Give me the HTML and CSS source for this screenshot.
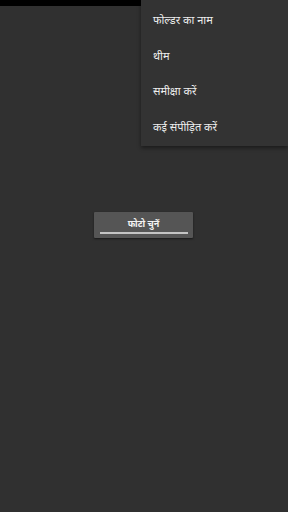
FILE: index.html
```html
<!DOCTYPE html>
<html lang="hi">
<head>
  <meta charset="UTF-8">
  <title>फोटो चुनें</title>
  <link rel="stylesheet" href="styles.css">
</head>
<body>
  <div class="screen">
    <div class="status-bar"></div>

    <div class="content">
      <button class="pick-btn">फोटो चुनें</button>
    </div>

    <ul class="menu">
      <li>फोल्डर का नाम</li>
      <li>थीम</li>
      <li>समीक्षा करें</li>
      <li>कई संपीड़ित करें</li>
    </ul>
  </div>
</body>
</html>
```

FILE: styles.css
```css
body {
  margin: 0;
  padding: 0;
  background-color: #303030;
  font-family: 'Noto Sans', 'Lohit Devanagari', sans-serif;
}

.screen {
  position: relative;
  width: 288px;
  height: 512px;
  overflow: hidden;
}

.status-bar {
  width: 141px;
  height: 6px;
  background-color: #000;
}

.content {
  display: flex;
  justify-content: center;
  padding-top: 206px;
  padding-right: 1px;
}

.pick-btn {
  position: relative;
  width: 99px;
  height: 26px;
  margin-left: 0;
  padding: 0 0 4px;
  background-color: #555555;
  color: #f2f2f2;
  font-family: 'Noto Sans', sans-serif;
  font-size: 9px;
  font-weight: bold;
  border: none;
  border-radius: 1px;
  box-shadow: 0 1px 2px rgba(0, 0, 0, 0.5);
}

.pick-btn::after {
  content: "";
  position: absolute;
  left: 6px;
  right: 5px;
  bottom: 4px;
  height: 2px;
  background-color: #c4c4c4;
}

/* overflow menu, lies over the page */
.menu {
  position: absolute;
  top: 0;
  right: 0;
  width: 147px;
  margin: 0;
  padding: 4px 0 0;
  list-style: none;
  background-color: #333333;
  box-shadow: 0 2px 4px rgba(0, 0, 0, 0.45);
}

.menu li {
  height: 35.5px;
  line-height: 32px;
  padding-left: 12px;
  color: #eeeeee;
  font-size: 11px;
}
```
